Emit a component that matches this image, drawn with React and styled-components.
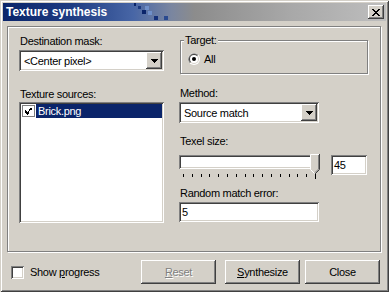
import React from "react";
import styled, { createGlobalStyle, css } from "styled-components";

const Global = createGlobalStyle`
  html, body { margin: 0; padding: 0; background: #d4d0c8; overflow: hidden; }
  body { font-family: "Liberation Sans", Arial, sans-serif; font-size: 11px; letter-spacing: -0.3px; color: #000; }
  * { box-sizing: border-box; }
`;

const sunken = css`
  box-shadow: inset 1px 1px #808080, inset -1px -1px #ffffff, inset 2px 2px #404040, inset -2px -2px #d4d0c8;
`;
const raised = css`
  box-shadow: inset -1px -1px #404040, inset 1px 1px #ffffff, inset -2px -2px #808080, inset 2px 2px #d4d0c8;
`;

const Window = styled.div`
  width: 389px;
  height: 292px;
  padding: 3px;
  background: #d4d0c8;
  box-shadow: inset 1px 1px #d4d0c8, inset -1px -1px #404040, inset 2px 2px #ffffff, inset -2px -2px #808080;
  display: flex;
  flex-direction: column;
`;

const TitleBar = styled.div`
  position: relative;
  height: 18px;
  flex: none;
  display: flex;
  align-items: center;
  justify-content: space-between;
  padding: 0 2px 0 3px;
  background: linear-gradient(to right, #0a246a 0%, #1e3c82 18%, #4866a6 34%, #7a86a0 44%, #8c8c8c 50%, #a8a8a8 75%, #bebebe 100%);
`;

const TitleText = styled.span`
  color: #fff;
  font-weight: bold;
  font-size: 12px;
  letter-spacing: 0;
  line-height: 14px;
`;

const TitleDeco = styled.svg`
  position: absolute;
  left: 128px;
  top: 0;
`;

const CloseBtn = styled.div`
  width: 16px;
  height: 14px;
  background: #d4d0c8;
  ${raised};
  display: flex;
  align-items: center;
  justify-content: center;
  padding-right: 1px;
`;

const Panel = styled.div`
  margin: 5px 0 0 4px;
  width: 374px;
  height: 226px;
  flex: none;
  border: 1px solid #808080;
  box-shadow: 1px 1px #ffffff, inset 1px 1px #ffffff;
  padding: 8px 0 0 11px;
  display: flex;
  gap: 15px;
`;

const Column = styled.div`
  width: ${(p) => p.$w}px;
  display: flex;
  flex-direction: column;
  align-items: flex-start;
`;

const Label = styled.div`
  line-height: 13px;
  height: 13px;
  white-space: nowrap;
  margin-top: ${(p) => p.$mt || 0}px;
  margin-bottom: ${(p) => (p.$mb === undefined ? 2 : p.$mb)}px;
  margin-left: 1px;
`;

const ComboBox = styled.div`
  width: ${(p) => p.$w}px;
  height: 21px;
  background: #fff;
  ${sunken};
  display: flex;
  align-items: center;
  padding: 2px;
`;

const ComboText = styled.span`
  flex: 1;
  padding-left: 3px;
  white-space: nowrap;
`;

const DropBtn = styled.div`
  width: 16px;
  height: 17px;
  background: #d4d0c8;
  ${raised};
  display: flex;
  align-items: center;
  justify-content: center;
`;

const ListBox = styled.div`
  width: 145px;
  height: 121px;
  background: #fff;
  ${sunken};
  padding: 2px;
`;

const ListRow = styled.div`
  display: flex;
  align-items: center;
  height: 14px;
`;

const SmallCheck = styled.div`
  width: 13px;
  height: 12px;
  margin: 0 1px 0 1px;
  background: #fff;
  border: 1px solid #808080;
  display: flex;
  align-items: center;
  justify-content: center;
`;

const Selected = styled.div`
  flex: 1;
  height: 14px;
  line-height: 14px;
  background: #0a246a;
  color: #fff;
  padding-left: 2px;
`;

const Group = styled.div`
  position: relative;
  margin: 5px 0 0 1px;
  width: 188px;
  height: 34px;
  border: 1px solid #808080;
  box-shadow: 1px 1px #ffffff, inset 1px 1px #ffffff;
  display: flex;
  align-items: flex-start;
  padding: 12px 0 0 7px;
`;

const Legend = styled.span`
  position: absolute;
  top: -7px;
  left: 3px;
  padding: 0 1px;
  line-height: 13px;
  background: #d4d0c8;
`;

const RadioLabel = styled.span`
  margin-left: 4px;
  line-height: 12px;
`;

const SliderRow = styled.div`
  display: flex;
  align-items: flex-start;
  margin-top: 2px;
`;

const Slider = styled.div`
  position: relative;
  width: 141px;
  height: 25px;
  padding-top: 1px;
`;

const Track = styled.div`
  width: 136px;
  height: 14px;
  background: #fff;
  ${sunken};
`;

const Thumb = styled.svg`
  position: absolute;
  left: 131px;
  top: 0;
`;

const Ticks = styled.div`
  margin: 5px 0 0 4px;
  width: 133px;
  display: flex;
  justify-content: space-between;
  align-items: flex-start;
`;

const Tick = styled.span`
  width: 1px;
  height: ${(p) => (p.$long ? 5 : 3)}px;
  background: #000;
`;

const Edit = styled.div`
  width: ${(p) => p.$w}px;
  height: 20px;
  margin: ${(p) => p.$m || "0"};
  background: #fff;
  ${sunken};
  padding-left: 3px;
  display: flex;
  align-items: center;
`;

const BottomRow = styled.div`
  margin-top: 8px;
  height: 24px;
  flex: none;
  display: flex;
  align-items: center;
  padding: 0 6px 0 8px;
`;

const CheckBox = styled.div`
  width: 13px;
  height: 13px;
  background: #fff;
  ${sunken};
`;

const CheckLabel = styled.span`
  margin-left: 6px;
`;

const Button = styled.div`
  width: 75px;
  height: 24px;
  margin-left: ${(p) => (p.$ml === "auto" ? "auto" : `${p.$ml}px`)};
  background: #d4d0c8;
  ${raised};
  display: flex;
  align-items: center;
  justify-content: center;
  color: ${(p) => (p.$disabled ? "#808080" : "#000")};
  text-shadow: ${(p) => (p.$disabled ? "1px 1px #ffffff" : "none")};
`;

const U = styled.span`
  text-decoration: underline;
`;

const Triangle = () => (
  <svg width="7" height="4" viewBox="0 0 7 4" shapeRendering="crispEdges">
    <path d="M0 0h7v1H0zM1 1h5v1H1zM2 2h3v1H2zM3 3h1v1H3z" fill="#000" />
  </svg>
);

const Combo = ({ w, children }) => (
  <ComboBox $w={w}>
    <ComboText>{children}</ComboText>
    <DropBtn>
      <Triangle />
    </DropBtn>
  </ComboBox>
);

const Radio = () => (
  <svg width="12" height="12" viewBox="0 0 12 12">
    <circle cx="6" cy="6" r="6" fill="#ffffff" />
    <path d="M1.76 10.24A6 6 0 0 1 10.24 1.76Z" fill="#808080" />
    <circle cx="6" cy="6" r="5" fill="#d4d0c8" />
    <path d="M2.46 9.54A5 5 0 0 1 9.54 2.46Z" fill="#404040" />
    <circle cx="6" cy="6" r="4" fill="#ffffff" />
    <circle cx="6" cy="6" r="2" fill="#000000" />
  </svg>
);

const CheckMark = () => (
  <svg width="7" height="7" viewBox="0 0 7 7" shapeRendering="crispEdges">
    <path d="M6 0h1v1h-1zM5 1h1v1h-1zM4 2h1v1h-1zM0 2h1v3h-1zM1 3h1v3h-1zM2 4h1v3h-1zM3 3h1v3h-1zM5 0h1v2h-1zM4 1h1v2h-1zM6 0h1v2h-1z" fill="#000" />
  </svg>
);

export default function App() {
  const ticks = Array.from({ length: 16 }, (_, i) => i);
  return (
    <>
      <Global />
      <Window>
        <TitleBar>
          <TitleText>Texture synthesis</TitleText>
          <TitleDeco width="45" height="18" viewBox="0 0 45 18" shapeRendering="crispEdges">
            <rect x="3" y="0" width="2" height="3" fill="#0a246a" />
            <rect x="7" y="3" width="3" height="3" fill="#1c3a80" />
            <rect x="14" y="3" width="4" height="4" fill="#6f8fc9" />
            <rect x="11" y="7" width="4" height="4" fill="#0a246a" />
            <rect x="17" y="8" width="4" height="4" fill="#6f8fc9" />
            <rect x="23" y="13" width="4" height="4" fill="#14307a" />
            <rect x="33" y="13" width="4" height="4" fill="#2a4a90" />
          </TitleDeco>
          <CloseBtn>
            <svg width="8" height="7" viewBox="0 0 8 7" shapeRendering="crispEdges">
              <path d="M0 0h2v1h-2zM6 0h2v1h-2zM1 1h2v1h-2zM5 1h2v1h-2zM2 2h4v1h-4zM3 3h2v1h-2zM2 4h4v1h-4zM1 5h2v1h-2zM5 5h2v1h-2zM0 6h2v1h-2zM6 6h2v1h-2z" fill="#000" />
            </svg>
          </CloseBtn>
        </TitleBar>

        <Panel>
          <Column $w={145}>
            <Label>Destination mask:</Label>
            <Combo w={145}>&lt;Center pixel&gt;</Combo>
            <Label $mt={17} $mb={1}>Texture sources:</Label>
            <ListBox>
              <ListRow>
                <SmallCheck>
                  <CheckMark />
                </SmallCheck>
                <Selected>Brick.png</Selected>
              </ListRow>
            </ListBox>
          </Column>

          <Column $w={190}>
            <Group>
              <Legend>Target:</Legend>
              <Radio />
              <RadioLabel>All</RadioLabel>
            </Group>
            <Label $mt={13}>Method:</Label>
            <Combo w={140}>Source match</Combo>
            <Label $mt={12} $mb={4}>Texel size:</Label>
            <SliderRow>
              <Slider>
                <Track />
                <Thumb width="10" height="21" viewBox="0 0 10 21">
                  <path d="M0.5 0.5H9.5V15.5L5 20 0.5 15.5Z" fill="#d4d0c8" />
                  <path d="M0.5 15.5V0.5H9" stroke="#ffffff" fill="none" />
                  <path d="M0.5 15.5L4.5 19.5" stroke="#ffffff" fill="none" />
                  <path d="M9.5 0V15.5L5 20" stroke="#404040" fill="none" />
                  <path d="M8.5 1V15.1L5 18.6" stroke="#808080" fill="none" />
                </Thumb>
                <Ticks>
                  {ticks.map((i) => (
                    <Tick key={i} $long={i === ticks.length - 1} />
                  ))}
                </Ticks>
              </Slider>
              <Edit $w={36} $m="1px 0 0 11px">45</Edit>
            </SliderRow>
            <Label $mt={8}>Random match error:</Label>
            <Edit $w={140}>5</Edit>
          </Column>
        </Panel>

        <BottomRow>
          <CheckBox />
          <CheckLabel>
            Show <U>p</U>rogress
          </CheckLabel>
          <Button $ml="auto" $disabled>
            <U>R</U>eset
          </Button>
          <Button $ml={9}>
            <U>S</U>ynthesize
          </Button>
          <Button $ml={5}>Close</Button>
        </BottomRow>
      </Window>
    </>
  );
}
